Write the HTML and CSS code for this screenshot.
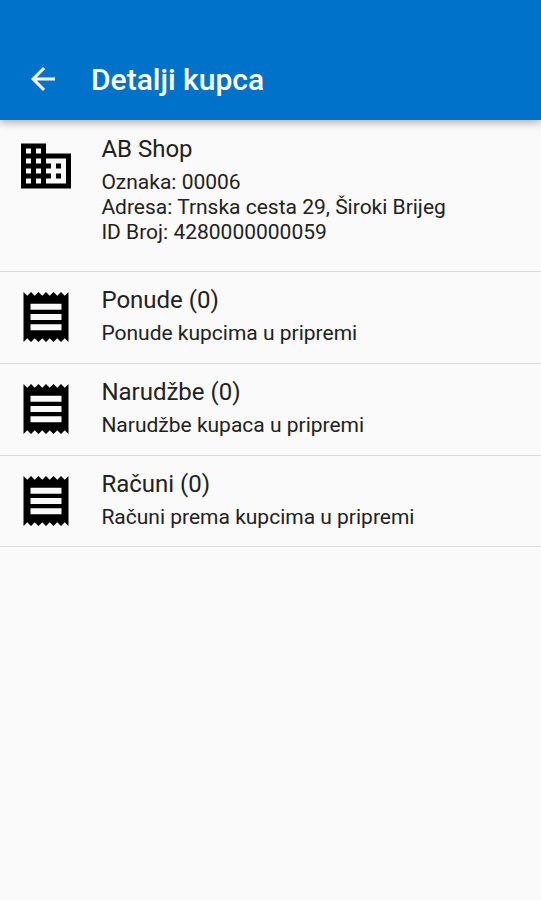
FILE: index.html
```html
<!DOCTYPE html>
<html lang="hr">
<head>
  <meta charset="UTF-8" />
  <meta name="viewport" content="width=device-width, initial-scale=1.0"/>
  <title>Detalji kupca</title>
  <link rel="stylesheet" href="styles.css">
</head>
<body>
  <header class="app-bar">
    <svg class="back" viewBox="0 0 24 24"><path d="M20 11H7.83l5.59-5.59L12 4l-8 8 8 8 1.41-1.41L7.83 13H20v-2z"/></svg>
    <h1>Detalji kupca</h1>
  </header>

  <main class="list">
    <div class="item customer">
      <svg class="icon" viewBox="0 0 24 24"><path d="M12 7V3H2v18h20V7H12zM6 19H4v-2h2v2zm0-4H4v-2h2v2zm0-4H4V9h2v2zm0-4H4V5h2v2zm4 12H8v-2h2v2zm0-4H8v-2h2v2zm0-4H8V9h2v2zm0-4H8V5h2v2zm10 12h-8v-2h2v-2h-2v-2h2v-2h-2V9h8v10zm-2-8h-2v2h2v-2zm0 4h-2v2h2v-2z"/></svg>
      <div class="text">
        <h2>AB Shop</h2>
        <p>Oznaka: 00006<br/>
        Adresa: Trnska cesta 29, Široki Brijeg<br/>
        ID Broj: 4280000000059</p>
      </div>
    </div>
    <div class="item">
      <svg class="icon" viewBox="0 0 24 24"><path d="M18.200 17.300H5.800v-2.400h12.400v2.400zm0-4.100H5.800v-2.400h12.400v2.400zm0-4.100H5.800V6.700h12.400v2.400zM3 22l1.500-1.500L6 22l1.500-1.500L9 22l1.500-1.500L12 22l1.500-1.500L15 22l1.500-1.500L18 22l1.500-1.500L21 22V2l-1.500 1.500L18 2l-1.500 1.500L15 2l-1.500 1.500L12 2l-1.500 1.500L9 2 7.500 3.500 6 2 4.500 3.500 3 2v20z"/></svg>
      <div class="text">
        <h2>Ponude (0)</h2>
        <p>Ponude kupcima u pripremi</p>
      </div>
    </div>
    <div class="item">
      <svg class="icon" viewBox="0 0 24 24"><path d="M18.200 17.300H5.800v-2.400h12.400v2.400zm0-4.100H5.800v-2.400h12.400v2.400zm0-4.100H5.800V6.700h12.400v2.400zM3 22l1.500-1.500L6 22l1.500-1.500L9 22l1.500-1.500L12 22l1.500-1.500L15 22l1.500-1.500L18 22l1.500-1.500L21 22V2l-1.500 1.500L18 2l-1.500 1.500L15 2l-1.500 1.500L12 2l-1.500 1.500L9 2 7.500 3.500 6 2 4.500 3.500 3 2v20z"/></svg>
      <div class="text">
        <h2>Narudžbe (0)</h2>
        <p>Narudžbe kupaca u pripremi</p>
      </div>
    </div>
    <div class="item">
      <svg class="icon" viewBox="0 0 24 24"><path d="M18.200 17.300H5.800v-2.400h12.400v2.400zm0-4.100H5.800v-2.400h12.400v2.400zm0-4.100H5.800V6.700h12.400v2.400zM3 22l1.500-1.500L6 22l1.500-1.500L9 22l1.500-1.500L12 22l1.500-1.500L15 22l1.500-1.500L18 22l1.500-1.500L21 22V2l-1.500 1.500L18 2l-1.500 1.500L15 2l-1.500 1.500L12 2l-1.500 1.500L9 2 7.500 3.500 6 2 4.500 3.500 3 2v20z"/></svg>
      <div class="text">
        <h2>Računi (0)</h2>
        <p>Računi prema kupcima u pripremi</p>
      </div>
    </div>
  </main>
</body>
</html>
```

FILE: styles.css
```css
* {
  box-sizing: border-box;
}
body {
  font-family: Roboto, "Liberation Sans", sans-serif;
  background: #fafafa;
  color: #212121;
  margin: 0;
  min-height: 100vh;
}
h1, h2, p {
  margin: 0;
}
.app-bar {
  display: flex;
  gap: 30px;
  height: 120px;
  padding: 62px 25px 0;
  background: #0072ca;
  color: #fff;
  box-shadow: 0 2px 9px rgba(0,0,0,0.35);
}
.app-bar h1 {
  font-size: 30px;
  font-weight: 500;
  line-height: 36px;
}
.back {
  width: 36px;
  height: 36px;
  margin-top: -1px;
  fill: #fff;
}
.item {
  display: flex;
  gap: 25.4px;
  height: 91.8px;
  padding: 12px 16px 0;
  border-bottom: 1px solid #dcdcdc;
}
.customer {
  height: 152px;
  padding-top: 13px;
}
.icon {
  flex: none;
  width: 60px;
  height: 60px;
  margin-top: 3px;
  fill: #000;
}
.item h2 {
  font-size: 24px;
  font-weight: 400;
  line-height: 32px;
}
.item p {
  font-size: 21px;
  line-height: 25px;
  margin-top: 5px;
}
```
